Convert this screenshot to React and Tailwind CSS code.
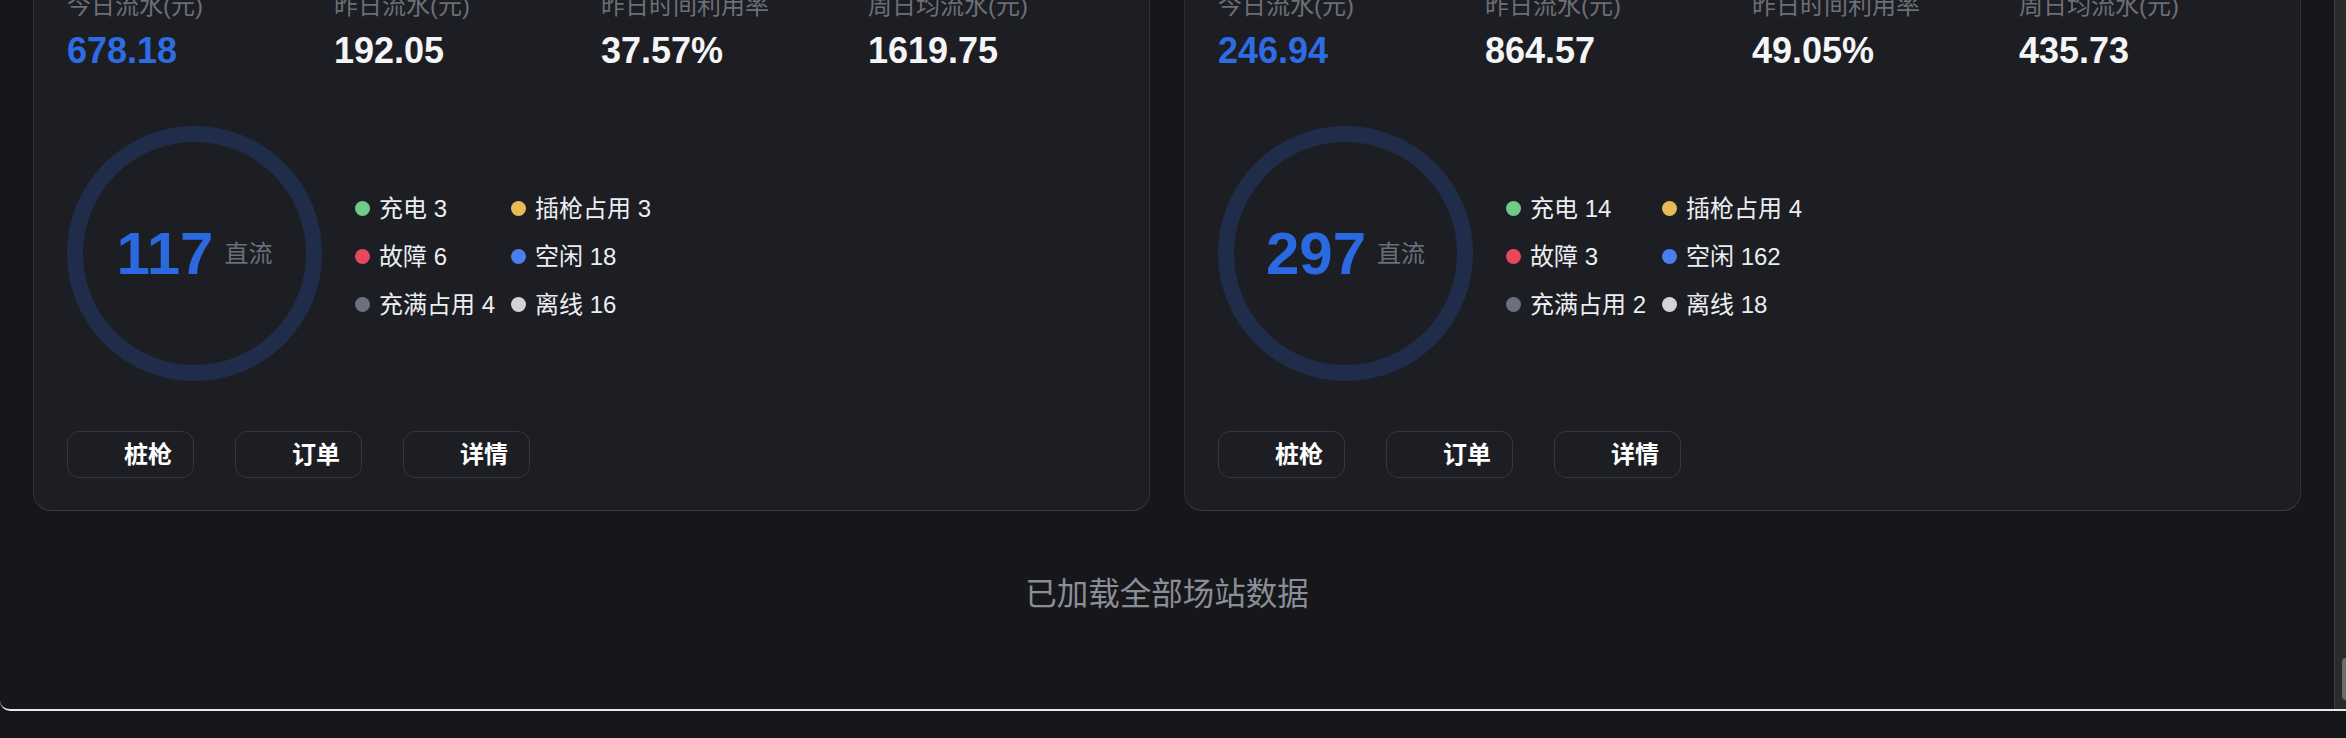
import React from 'react';

const stations = [
  {
    id: 1,
    stats: [
      { label: '今日流水(元)', value: '678.18', accent: true },
      { label: '昨日流水(元)', value: '192.05' },
      { label: '昨日时间利用率', value: '37.57%' },
      { label: '周日均流水(元)', value: '1619.75' },
    ],
    total: 117,
    legend: [
      { name: '充电', count: 3, dot: 'bg-[#6fcb87]' },
      { name: '插枪占用', count: 3, dot: 'bg-[#e6bb57]' },
      { name: '故障', count: 6, dot: 'bg-[#e84760]' },
      { name: '空闲', count: 18, dot: 'bg-[#4a7ff0]' },
      { name: '充满占用', count: 4, dot: 'bg-[#6b7080]' },
      { name: '离线', count: 16, dot: 'bg-[#d2d4d9]' },
    ],
  },
  {
    id: 2,
    stats: [
      { label: '今日流水(元)', value: '246.94', accent: true },
      { label: '昨日流水(元)', value: '864.57' },
      { label: '昨日时间利用率', value: '49.05%' },
      { label: '周日均流水(元)', value: '435.73' },
    ],
    total: 297,
    legend: [
      { name: '充电', count: 14, dot: 'bg-[#6fcb87]' },
      { name: '插枪占用', count: 4, dot: 'bg-[#e6bb57]' },
      { name: '故障', count: 3, dot: 'bg-[#e84760]' },
      { name: '空闲', count: 162, dot: 'bg-[#4a7ff0]' },
      { name: '充满占用', count: 2, dot: 'bg-[#6b7080]' },
      { name: '离线', count: 18, dot: 'bg-[#d2d4d9]' },
    ],
  },
];

const actions = ['桩枪', '订单', '详情'];

// one station card: stats row, gun status ring + legend, action buttons
const StationCard = ({ station }) => (
  <div className="rounded-[18px] border-[1.5px] border-[#2f3137] border-b-[#3a3c42] bg-[#1d1e23] px-[33px] pt-[33px] pb-[32px]">
    <div className="grid grid-cols-[267px_267px_267px_1fr]">
      {station.stats.map((s) => (
        <div key={s.label}>
          <p className="text-[24px] leading-[36px] text-[#6c6f77]">{s.label}</p>
          <p
            className={`mt-[4px] text-[36px] leading-[45px] font-bold ${
              s.accent ? 'text-[#2d6ce2]' : 'text-[#f4f5f7]'
            }`}
          >
            {s.value}
          </p>
        </div>
      ))}
    </div>

    <div className="mt-[53px] flex items-center gap-[33px]">
      <div className="flex h-[255px] w-[255px] shrink-0 items-center justify-center rounded-full border-[16px] border-[#1f2d4a]">
        <span className="text-[60px] leading-none font-bold text-[#2b69e0]">{station.total}</span>
        <span className="ml-[11px] text-[24px] leading-none text-[#6b6f78]">直流</span>
      </div>

      <div className="mt-[6px] grid grid-cols-[156px_auto] gap-y-[12px]">
        {station.legend.map((item) => (
          <div key={item.name} className="flex h-[36px] items-center gap-[9px]">
            <span className={`h-[15px] w-[15px] rounded-full ${item.dot}`}></span>
            <span className="text-[24px] leading-[36px] text-[#eceef1]">
              {item.name} {item.count}
            </span>
          </div>
        ))}
      </div>
    </div>

    <div className="mt-[50px] flex gap-[41px]">
      {actions.map((a) => (
        <button
          key={a}
          className="flex h-[47px] w-[127px] items-center rounded-[12px] border-[1.5px] border-[#35373d] pl-[56px] text-[24px] font-bold text-white"
        >
          {a}
        </button>
      ))}
    </div>
  </div>
);

export default function App() {
  return (
    <div className="h-[738px] w-[2346px] overflow-hidden bg-[#16171b] font-['Liberation_Sans','Noto_Sans_CJK_SC',sans-serif]">
      <div className="flex h-[711px] overflow-hidden rounded-bl-[10px] border-b-2 border-[#e9e9eb]">
        {/* scrolled content */}
        <main className="flex-1 overflow-hidden px-[33px]">
          <div className="-mt-[46px] grid grid-cols-2 gap-[34px]">
            {stations.map((st) => (
              <StationCard key={st.id} station={st} />
            ))}
          </div>
          <p className="mt-[60px] text-center text-[31.5px] leading-[47px] text-[#8b8e96]">已加载全部场站数据</p>
        </main>

        {/* scrollbar */}
        <div className="flex w-[12px] flex-col border-l border-[#3e3e3e] bg-[#2b2b2b]">
          <div className="mt-auto mb-[9px] ml-auto h-[42px] w-[4px] rounded-l-full bg-[#6b6b6b]"></div>
        </div>
      </div>
    </div>
  );
}
